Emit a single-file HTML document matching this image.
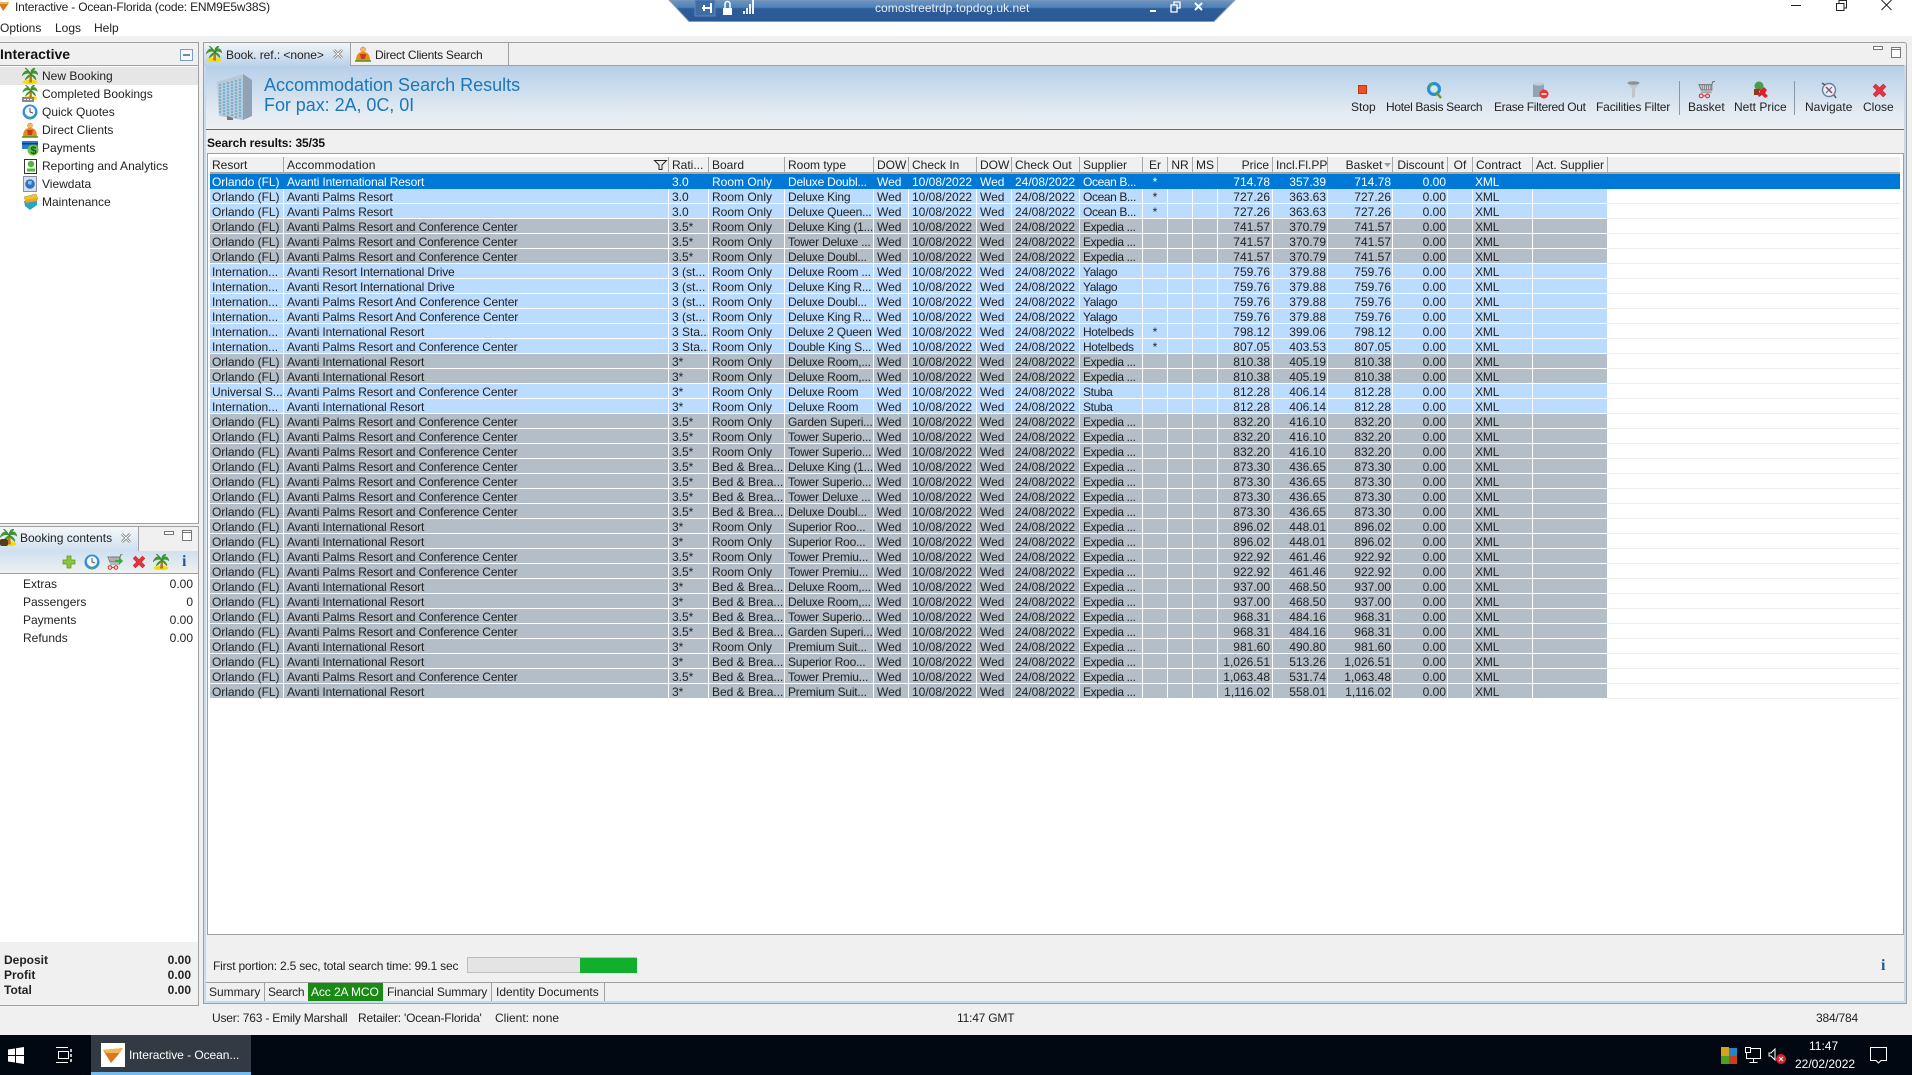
<!DOCTYPE html>
<html><head><meta charset="utf-8"><title>Interactive</title>
<style>
html,body{margin:0;padding:0;width:1912px;height:1075px;overflow:hidden;background:#f0f0f0}
body{position:relative;font:12px/14px "Liberation Sans",sans-serif;color:#222}
.a{position:absolute}
.t{position:absolute;white-space:nowrap;line-height:14px}
.n{letter-spacing:-.2px}
.m{letter-spacing:-.32px}
svg{position:absolute;overflow:visible}
table{position:absolute;left:210px;top:157px;width:1690px;border-collapse:separate;border-spacing:0;table-layout:fixed;font-size:12px}
th{height:15px;padding:0 3px;font-weight:normal;text-align:left;background:#f0f0f0;border-right:1px solid #a8a8a8;border-bottom:2px solid #a8a8a8;box-sizing:content-box;white-space:nowrap;overflow:hidden;line-height:14px}
th:first-child{padding-left:2px}
th:nth-child(2){letter-spacing:.2px}
th:last-child{border-right:0}
td{height:12px;padding:2px 3px 0;border-right:1px solid #fff;border-bottom:1px solid #fff;white-space:nowrap;overflow-x:clip;overflow-y:visible;line-height:12px}
td:nth-child(1){padding-left:2px;letter-spacing:-.05px}
td:nth-child(2){letter-spacing:-.15px}
td:nth-child(5){letter-spacing:-.22px}
td:nth-child(10){letter-spacing:-.38px}
td:nth-child(19){padding-left:2px;letter-spacing:-.15px}
tr.b td{background:#bbdcff}
tr.g td{background:#b4bec9}
tr.s td{background:#0078d7;color:#fff;border-right-color:#0078d7;border-bottom-color:#0078d7}
tbody tr:not(.s) td:nth-child(21){background:#fff;border-bottom-color:#eee;border-right:0}
td:nth-child(n+14):nth-child(-n+17),th:nth-child(n+14):nth-child(-n+17){text-align:right}
td:nth-child(14){padding-right:2px}
td:nth-child(n+15):nth-child(-n+17){padding-right:1px}
td:nth-child(11),td:nth-child(18),th:nth-child(n+11):nth-child(-n+13),th:nth-child(18){text-align:center}
tr.s td:nth-child(n+1){border-right-color:#0078d7}
.ex{background:#fff}
</style></head><body>

<!-- title bar -->
<div class="a ex" style="left:0;top:0;width:1912px;height:36px"></div>
<svg style="left:0;top:1px" width="10" height="10"><path d="M-2 1L9 1L7 5L3 10Z" fill="#d9781c"/><path d="M-2 1L9 1L7 3L0 3Z" fill="#f2b35a"/></svg>
<div class="t" style="left:15px;top:0;letter-spacing:-.2px">Interactive - Ocean-Florida (code: ENM9E5w38S)</div>
<div class="t" style="left:0;top:21px">Options</div>
<div class="t" style="left:55px;top:21px">Logs</div>
<div class="t" style="left:94px;top:21px">Help</div>
<svg style="left:1791px;top:0" width="110" height="12"><path d="M0 5.500H10" stroke="#222"/><path d="M45.500 3.500h7.500v7h-7.500zM48 3V.5h7.500V8H53" fill="none" stroke="#222"/><path d="M90.500 0L100.500 10M100.500 0L90.500 10" stroke="#222"/></svg>

<!-- RDP bar -->
<svg style="left:669px;top:0" width="566" height="23"><defs><linearGradient id="rd" x1="0" y1="0" x2="0" y2="1"><stop offset="0" stop-color="#6a96c4"/><stop offset=".35" stop-color="#4f80b5"/><stop offset=".4" stop-color="#2e5d99"/><stop offset="1" stop-color="#2a5896"/></linearGradient></defs><path d="M0 0H566L545 21.500H20Z" fill="url(#rd)" stroke="#8a9aad"/><rect x="26" y="0" width="20" height="16" fill="#3d6ca6" stroke="#5d88ba"/><path d="M33 8H42M42 3V13M35 5V11" stroke="#fff" stroke-width="2" fill="none"/><path d="M54 8h9v7h-9z" fill="#fff"/><path d="M56 8V4a2.500 2.500 0 015 0v4" fill="none" stroke="#fff" stroke-width="1.500"/><path d="M75 14v-3M78 14V8M81 14V4M84 14V0" stroke="#fff" stroke-width="1.800"/><path d="M481 11h6" stroke="#fff" stroke-width="2"/><path d="M502 5h6v7h-6zM505 5V2h6v6h-3" fill="none" stroke="#fff" stroke-width="1.300"/><path d="M526 3l7 7M533 3l-7 7" stroke="#fff" stroke-width="2"/></svg>
<div class="t" style="left:875px;top:1px;color:#e8eef6;letter-spacing:.06px">comostreetrdp.topdog.uk.net</div>

<!-- left top panel -->
<div class="a" style="left:0;top:42px;width:198px;height:480px;border-top:1px solid #a0a0a0;border-right:1px solid #a0a0a0;border-bottom:1px solid #a0a0a0;background:#fff;box-sizing:content-box"></div>
<div class="a" style="left:0;top:43px;width:198px;height:22px;background:#f0f0f0;border-bottom:1px solid #a0a0a0"></div>
<div class="t" style="left:0;top:47px;font-size:14px;font-weight:bold;color:#111">Interactive</div>
<svg style="left:180px;top:48px" width="13" height="13"><rect x=".5" y="1.500" width="12" height="11" fill="#f6f8fb" stroke="#7b9ec4"/><path d="M3 7H10" stroke="#2a4f80" stroke-width="1.300"/></svg>
<div class="a" style="left:0;top:67px;width:198px;height:18px;background:#e6e6e6"></div>

<svg width="0" height="0" style="left:0;top:0"><defs>
<symbol id="palm" viewBox="0 0 16 16"><ellipse cx="8" cy="14" rx="7.500" ry="2.200" fill="#f5dc00"/><path d="M7 14.500L8 6L10 6L10 14.500Z" fill="#b67a20"/><path d="M9 6C6 1 2 2 0 8C3 5 6 5 9 6ZM9 6C12 1 15 2 16 7C14 5 11 5 9 6ZM9 6C8 3 10 0 13 0C12 3 10 4 9 6ZM9 6C7 3 5 0 3 0C5 3 8 4 9 6ZM9 6C6 7 4 9 3 12C6 10 8 9 9 6ZM9 6C12 7 14 9 14 12C12 10 10 9 9 6Z" fill="#3f9b2a" stroke="#2c7a1c" stroke-width=".4"/></symbol>
<symbol id="clock" viewBox="0 0 16 16"><circle cx="8" cy="8" r="7.500" fill="#2f8fd8"/><path d="M2 11A7 7 0 0014 11L8 16Z" fill="#54b948"/><circle cx="8" cy="7.500" r="5.200" fill="#f4f6f8"/><path d="M8 4V8L11 9" stroke="#555" fill="none"/></symbol>
<symbol id="client" viewBox="0 0 16 16"><circle cx="8" cy="3.500" r="2.500" fill="#f3b95f" stroke="#c66" stroke-width=".5"/><path d="M1 15C1 8 4 6 8 6C12 6 15 8 15 15Z" fill="#e88a1a"/><path d="M5 8H11L10 13H6Z" fill="#c83a1c"/><path d="M0 15H16" stroke="#3f9b2a" stroke-width="1.500"/></symbol>
<symbol id="cross" viewBox="0 0 16 16"><path d="M2 4.500L4.500 2L8 5.500L11.500 2L14 4.500L10.500 8L14 11.500L11.500 14L8 10.500L4.500 14L2 11.500L5.500 8Z" fill="#e8333f" stroke="#b9202a" stroke-width=".5"/></symbol>
<symbol id="cart" viewBox="0 0 16 16"><path d="M1 3H13V8H3ZM13 3L14 0H16" fill="#ccc" stroke="#777"/><path d="M4 3V8M6 3V8M8 3V8M10 3V8M12 3V8" stroke="#777" stroke-width=".7"/><path d="M3 10H13" stroke="#888"/><circle cx="3" cy="13.500" r="1.800" fill="none" stroke="#d33" stroke-width="1.100"/><circle cx="9" cy="13.500" r="1.800" fill="none" stroke="#d33" stroke-width="1.100"/><path d="M5 13.500H7" stroke="#d33"/></symbol>
</defs></svg>

<svg style="left:22px;top:67px" width="16" height="18"><use href="#palm" width="16" height="18"/></svg>
<svg style="left:22px;top:85px" width="16" height="18"><use href="#palm" width="16" height="15"/><rect x="0" y="12" width="12" height="5" fill="#888"/><path d="M2 14.500h8" stroke="#eee" stroke-dasharray="2 1"/></svg>
<svg style="left:22px;top:103px" width="16" height="18"><use href="#clock" y="1" width="16" height="16"/></svg>
<svg style="left:22px;top:121px" width="16" height="18"><use href="#client" y="1" width="16" height="16"/></svg>
<svg style="left:22px;top:139px" width="16" height="18"><path d="M0 2H16V10H0Z" fill="#2b7fd0"/><path d="M0 4H16V5.500H0Z" fill="#0c3d78"/><circle cx="11" cy="11" r="5.500" fill="#6cc04a"/><text x="8.500" y="15" font-size="11" font-weight="bold" fill="#0a5c12" font-family="Liberation Sans, sans-serif">$</text></svg>
<svg style="left:23px;top:157px" width="15" height="18"><rect x="1.500" y="2.500" width="12" height="14" fill="#fff" stroke="#333"/><circle cx="8" cy="7" r="3.200" fill="#53b83a"/><path d="M4 13H12" stroke="#53b83a" stroke-width="3"/></svg>
<svg style="left:23px;top:175px" width="15" height="18"><rect x=".5" y="1.500" width="13" height="15" fill="#d9dfea" stroke="#8892a6"/><circle cx="7" cy="9" r="4.800" fill="#2c72c8"/><path d="M5 6L9 6L8 10L5 9Z" fill="#8fbdea"/></svg>
<svg style="left:23px;top:193px" width="15" height="18"><path d="M1 4L13 1L15 6L3 9Z" fill="#f2c42b" stroke="#b88a10" stroke-width=".5"/><path d="M1 8L14 6V12L7 17L2 13Z" fill="#2ca4c4"/><path d="M2 7L14 5L14 8L3 10Z" fill="#e7a52a"/></svg>

<div class="t" style="left:42px;top:69px">New Booking</div>
<div class="t" style="left:42px;top:87px">Completed Bookings</div>
<div class="t" style="left:42px;top:105px">Quick Quotes</div>
<div class="t" style="left:42px;top:123px">Direct Clients</div>
<div class="t" style="left:42px;top:141px">Payments</div>
<div class="t" style="left:42px;top:159px">Reporting and Analytics</div>
<div class="t" style="left:42px;top:177px">Viewdata</div>
<div class="t" style="left:42px;top:195px">Maintenance</div>

<!-- booking contents panel -->
<div class="a" style="left:0;top:526px;width:198px;height:478px;border-top:1px solid #a0a0a0;border-right:1px solid #a0a0a0;border-bottom:1px solid #a0a0a0;background:#f0f0f0"></div>
<div class="a" style="left:0;top:551px;width:198px;height:22px;background:linear-gradient(#cfe0f0,#f0f0f0);border-bottom:1px solid #a0a0a0"></div>
<div class="a" style="left:0;top:527px;width:138px;height:24px;background:linear-gradient(#f5f7fa,#cfe0f0);border-right:1px solid #a0a0a0"></div>
<div class="a" style="left:0;top:574px;width:198px;height:368px;background:#fff"></div>
<svg style="left:0;top:529px" width="17" height="17"><use href="#palm" width="17" height="17"/><rect x="0" y="10" width="8" height="7" rx="2" fill="#5a3a1c"/></svg>
<div class="t" style="left:20px;top:531px">Booking contents</div>
<svg style="left:121px;top:533px" width="11" height="11"><path d="M1 1L9 9M9 1L1 9" stroke="#777" stroke-width="2.600"/><path d="M1 1L9 9M9 1L1 9" stroke="#fff" stroke-width="1"/></svg>
<svg style="left:164px;top:530px" width="30" height="13"><rect x=".5" y="1.500" width="9" height="3" fill="#fff" stroke="#777"/><rect x="18.500" y=".5" width="9" height="10" fill="#fff" stroke="#777"/><path d="M18.500 2.500h9" stroke="#777"/></svg>
<svg style="left:62px;top:555px" width="14" height="14"><path d="M5 1H9V5H13V9H9V13H5V9H1V5H5Z" fill="#8cc63f" stroke="#5c9120" stroke-width=".7"/></svg>
<svg style="left:84px;top:554px" width="16" height="16"><use href="#clock" width="16" height="16"/></svg>
<svg style="left:107px;top:554px" width="16" height="16"><use href="#cart" width="16" height="16"/><path d="M8 6H12V3L16 7L12 11V8H8Z" fill="#2cb52c"/></svg>
<svg style="left:131px;top:554px" width="16" height="16"><use href="#cross" width="16" height="16"/></svg>
<svg style="left:153px;top:554px" width="16" height="16"><use href="#palm" width="16" height="16"/></svg>
<div class="t" style="left:182px;top:554px;font:bold 16px/16px 'Liberation Serif',serif;color:#1f5a9c">i</div>
<div class="t" style="left:23px;top:577px">Extras</div><div class="t" style="right:1719px;top:577px">0.00</div>
<div class="t" style="left:23px;top:595px">Passengers</div><div class="t" style="right:1719px;top:595px">0</div>
<div class="t" style="left:23px;top:613px">Payments</div><div class="t" style="right:1719px;top:613px">0.00</div>
<div class="t" style="left:23px;top:631px">Refunds</div><div class="t" style="right:1719px;top:631px">0.00</div>
<div class="t" style="left:4px;top:953px;font-weight:bold">Deposit</div><div class="t" style="right:1721px;top:953px;font-weight:bold">0.00</div>
<div class="t" style="left:4px;top:968px;font-weight:bold">Profit</div><div class="t" style="right:1721px;top:968px;font-weight:bold">0.00</div>
<div class="t" style="left:4px;top:983px;font-weight:bold">Total</div><div class="t" style="right:1721px;top:983px;font-weight:bold">0.00</div>

<!-- right panel -->
<div class="a" style="left:203px;top:42px;width:1704px;height:962px;border-top:1px solid #a0a0a0;border-left:1px solid #a0a0a0;border-right:1px solid #a0a0a0;border-bottom:1px solid #a0a0a0;border-top-right-radius:3px;box-sizing:border-box;background:#f0f0f0"></div>
<div class="a" style="left:204px;top:65px;width:2px;height:938px;background:#c7dbee"></div>
<div class="a" style="left:1904px;top:65px;width:2px;height:938px;background:#c7dbee"></div>
<div class="a" style="left:204px;top:1001px;width:1702px;height:2px;background:#c7dbee"></div>
<div class="a" style="left:206px;top:65px;width:1698px;height:1px;background:#a0a0a0"></div>
<div class="a" style="left:206px;top:66px;width:1698px;height:63px;background:linear-gradient(#b5cfe8,#e4ebf2 75%,#eef0f2)"></div>
<div class="a" style="left:206px;top:129px;width:1698px;height:1px;background:#1f84b4"></div>
<!-- tabs -->
<div class="a" style="left:204px;top:43px;width:146px;height:23px;background:linear-gradient(#f2f5f8,#b9d1e9);border-right:1px solid #a0a0a0;border-top-left-radius:4px"></div>
<div class="a" style="left:351px;top:43px;width:157px;height:22px;background:#f0f0f0;border-right:1px solid #a0a0a0"></div>
<svg style="left:206px;top:46px" width="16" height="16"><use href="#palm" width="16" height="16"/></svg>
<div class="t" style="left:226px;top:48px;letter-spacing:-.05px">Book. ref.: &lt;none&gt;</div>
<svg style="left:333px;top:49px" width="11" height="11"><path d="M1 1L9 9M9 1L1 9" stroke="#777" stroke-width="2.600"/><path d="M1 1L9 9M9 1L1 9" stroke="#fff" stroke-width="1"/></svg>
<svg style="left:355px;top:46px" width="16" height="16"><use href="#client" width="16" height="16"/></svg>
<div class="t" style="left:375px;top:48px;letter-spacing:-.25px">Direct Clients Search</div>
<svg style="left:1873px;top:45px" width="30" height="14"><rect x=".5" y="1.500" width="9" height="3" fill="#fff" stroke="#777"/><rect x="18.500" y="2.500" width="9" height="10" fill="#fff" stroke="#777"/><path d="M18.500 4.500h9" stroke="#777"/></svg>

<!-- header content -->
<svg style="left:217px;top:74px" width="36" height="46"><path d="M0 8L26 0L35 6V42L26 46L2 42Z" fill="#b9c8d4"/><path d="M26 0L35 6V42L26 46Z" fill="#8ea4b4"/><path d="M3 10V40M7 9V41M11 8V42M15 7V43M19 6V44M23 5V44" stroke="#6fb4d4" stroke-width="2" stroke-dasharray="2 1"/><path d="M10 42l6 2v2h-6z" fill="#777"/></svg>
<div class="t" style="left:264px;top:76px;font-size:18px;line-height:18px;color:#1a78b8;">Accommodation Search Results</div>
<div class="t" style="left:264px;top:96px;font-size:18px;line-height:18px;color:#1a78b8;letter-spacing:-.05px">For pax: 2A, 0C, 0I</div>

<!-- toolbar -->
<svg style="left:1358px;top:85px" width="9" height="9"><rect x=".5" y=".5" width="8" height="8" fill="#f25022" stroke="#b83a10"/></svg>
<svg style="left:1426px;top:82px" width="17" height="17"><circle cx="8" cy="7" r="7" fill="#2a8fd4"/><path d="M3 4A7 7 0 017 1L6 6Z" fill="#4cae3c"/><circle cx="8" cy="7" r="3.800" fill="#cfeaf5"/><path d="M10 10L15 16" stroke="#6a9b20" stroke-width="2.400"/></svg>
<svg style="left:1532px;top:82px" width="17" height="17"><path d="M1 2C1 0 12 0 12 2V15H1Z" fill="#8fa3b5"/><ellipse cx="6.500" cy="2" rx="5.500" ry="1.600" fill="#c0ccd6"/><circle cx="12" cy="12" r="4.500" fill="#e33"/><path d="M9.500 12H14.500" stroke="#fff" stroke-width="1.500"/></svg>
<svg style="left:1626px;top:81px" width="15" height="18"><path d="M1 1H14L9 8V16L6 17V8Z" fill="#c3c6c8"/><ellipse cx="7.500" cy="2" rx="6" ry="1.800" fill="#8e9194"/></svg>
<svg style="left:1698px;top:81px" width="17" height="18"><use href="#cart" width="17" height="18"/></svg>
<svg style="left:1752px;top:81px" width="18" height="18"><circle cx="7" cy="5" r="4.500" fill="#4a9b4a"/><path d="M2 8H7V14H2Z" fill="#8a3b1c"/><path d="M6 7L9 9L12 6L15 9L13 12L16 15L13 17L10 14L7 16L5 13L8 11Z" fill="#dc2027"/></svg>
<svg style="left:1820px;top:81px" width="18" height="18"><circle cx="9" cy="9" r="6.500" fill="#e8eef4" stroke="#6a7f98" stroke-width="1.400"/><path d="M6 6L12 12" stroke="#c33" stroke-width="1.500"/><path d="M12 6L6 12" stroke="#2b6ab0"/><path d="M2 2L5 4M14 14L16 17" stroke="#555" stroke-width="1.500"/></svg>
<svg style="left:1871px;top:82px" width="17" height="17"><use href="#cross" width="17" height="17"/></svg>
<div class="t" style="left:1351px;top:100px">Stop</div>
<div class="t m" style="left:1386px;top:100px">Hotel Basis Search</div>
<div class="t m" style="left:1494px;top:100px">Erase Filtered Out</div>
<div class="t" style="left:1596px;top:100px;letter-spacing:-.15px">Facilities Filter</div>
<div class="t" style="left:1688px;top:100px">Basket</div>
<div class="t" style="left:1734px;top:100px">Nett Price</div>
<div class="t" style="left:1805px;top:100px">Navigate</div>
<div class="t" style="left:1863px;top:100px">Close</div>
<div class="a" style="left:1679px;top:81px;width:1px;height:34px;background:#8a98a6"></div>
<div class="a" style="left:1794px;top:81px;width:1px;height:34px;background:#8a98a6"></div>

<div class="t" style="left:207px;top:136px;font-weight:bold;color:#111;letter-spacing:-.1px">Search results: 35/35</div>

<!-- grid -->
<div class="a" style="left:207px;top:153px;width:1697px;height:782px;background:#fff;border:1px solid #a0a0a0;box-sizing:border-box"></div>
<table>
<colgroup><col style="width:74px"><col style="width:385px"><col style="width:40px"><col style="width:76px"><col style="width:89px"><col style="width:35px"><col style="width:68px"><col style="width:35px"><col style="width:68px"><col style="width:63px"><col style="width:25px"><col style="width:25px"><col style="width:25px"><col style="width:55px"><col style="width:55px"><col style="width:65px"><col style="width:55px"><col style="width:25px"><col style="width:60px"><col style="width:75px"><col style="width:292px"></colgroup>
<thead><tr><th>Resort<th>Accommodation<th>Rati...<th>Board<th>Room type<th>DOW<th>Check In<th>DOW<th>Check Out<th>Supplier<th>Er<th>NR<th>MS<th>Price<th>Incl.Fl.PP<th>Basket&nbsp;&nbsp;<th>Discount<th>Of<th>Contract<th>Act. Supplier<th></tr></thead>
<tbody>
<tr class=s><td>Orlando (FL)<td>Avanti International Resort<td>3.0<td>Room Only<td>Deluxe Doubl...<td>Wed<td>10/08/2022<td>Wed<td>24/08/2022<td>Ocean B...<td>*<td><td><td>714.78<td>357.39<td>714.78<td>0.00<td><td>XML<td><td></tr>
<tr class=b><td>Orlando (FL)<td>Avanti Palms Resort<td>3.0<td>Room Only<td>Deluxe King<td>Wed<td>10/08/2022<td>Wed<td>24/08/2022<td>Ocean B...<td>*<td><td><td>727.26<td>363.63<td>727.26<td>0.00<td><td>XML<td><td></tr>
<tr class=b><td>Orlando (FL)<td>Avanti Palms Resort<td>3.0<td>Room Only<td>Deluxe Queen...<td>Wed<td>10/08/2022<td>Wed<td>24/08/2022<td>Ocean B...<td>*<td><td><td>727.26<td>363.63<td>727.26<td>0.00<td><td>XML<td><td></tr>
<tr class=g><td>Orlando (FL)<td>Avanti Palms Resort and Conference Center<td>3.5*<td>Room Only<td>Deluxe King (1...<td>Wed<td>10/08/2022<td>Wed<td>24/08/2022<td>Expedia ...<td><td><td><td>741.57<td>370.79<td>741.57<td>0.00<td><td>XML<td><td></tr>
<tr class=g><td>Orlando (FL)<td>Avanti Palms Resort and Conference Center<td>3.5*<td>Room Only<td>Tower Deluxe ...<td>Wed<td>10/08/2022<td>Wed<td>24/08/2022<td>Expedia ...<td><td><td><td>741.57<td>370.79<td>741.57<td>0.00<td><td>XML<td><td></tr>
<tr class=g><td>Orlando (FL)<td>Avanti Palms Resort and Conference Center<td>3.5*<td>Room Only<td>Deluxe Doubl...<td>Wed<td>10/08/2022<td>Wed<td>24/08/2022<td>Expedia ...<td><td><td><td>741.57<td>370.79<td>741.57<td>0.00<td><td>XML<td><td></tr>
<tr class=b><td>Internation...<td>Avanti Resort International Drive<td>3 (st...<td>Room Only<td>Deluxe Room ...<td>Wed<td>10/08/2022<td>Wed<td>24/08/2022<td>Yalago<td><td><td><td>759.76<td>379.88<td>759.76<td>0.00<td><td>XML<td><td></tr>
<tr class=b><td>Internation...<td>Avanti Resort International Drive<td>3 (st...<td>Room Only<td>Deluxe King R...<td>Wed<td>10/08/2022<td>Wed<td>24/08/2022<td>Yalago<td><td><td><td>759.76<td>379.88<td>759.76<td>0.00<td><td>XML<td><td></tr>
<tr class=b><td>Internation...<td>Avanti Palms Resort And Conference Center<td>3 (st...<td>Room Only<td>Deluxe Doubl...<td>Wed<td>10/08/2022<td>Wed<td>24/08/2022<td>Yalago<td><td><td><td>759.76<td>379.88<td>759.76<td>0.00<td><td>XML<td><td></tr>
<tr class=b><td>Internation...<td>Avanti Palms Resort And Conference Center<td>3 (st...<td>Room Only<td>Deluxe King R...<td>Wed<td>10/08/2022<td>Wed<td>24/08/2022<td>Yalago<td><td><td><td>759.76<td>379.88<td>759.76<td>0.00<td><td>XML<td><td></tr>
<tr class=b><td>Internation...<td>Avanti International Resort<td>3 Sta...<td>Room Only<td>Deluxe 2 Queen<td>Wed<td>10/08/2022<td>Wed<td>24/08/2022<td>Hotelbeds<td>*<td><td><td>798.12<td>399.06<td>798.12<td>0.00<td><td>XML<td><td></tr>
<tr class=b><td>Internation...<td>Avanti Palms Resort and Conference Center<td>3 Sta...<td>Room Only<td>Double King S...<td>Wed<td>10/08/2022<td>Wed<td>24/08/2022<td>Hotelbeds<td>*<td><td><td>807.05<td>403.53<td>807.05<td>0.00<td><td>XML<td><td></tr>
<tr class=g><td>Orlando (FL)<td>Avanti International Resort<td>3*<td>Room Only<td>Deluxe Room,...<td>Wed<td>10/08/2022<td>Wed<td>24/08/2022<td>Expedia ...<td><td><td><td>810.38<td>405.19<td>810.38<td>0.00<td><td>XML<td><td></tr>
<tr class=g><td>Orlando (FL)<td>Avanti International Resort<td>3*<td>Room Only<td>Deluxe Room,...<td>Wed<td>10/08/2022<td>Wed<td>24/08/2022<td>Expedia ...<td><td><td><td>810.38<td>405.19<td>810.38<td>0.00<td><td>XML<td><td></tr>
<tr class=b><td>Universal S...<td>Avanti Palms Resort and Conference Center<td>3*<td>Room Only<td>Deluxe Room<td>Wed<td>10/08/2022<td>Wed<td>24/08/2022<td>Stuba<td><td><td><td>812.28<td>406.14<td>812.28<td>0.00<td><td>XML<td><td></tr>
<tr class=b><td>Internation...<td>Avanti International Resort<td>3*<td>Room Only<td>Deluxe Room<td>Wed<td>10/08/2022<td>Wed<td>24/08/2022<td>Stuba<td><td><td><td>812.28<td>406.14<td>812.28<td>0.00<td><td>XML<td><td></tr>
<tr class=g><td>Orlando (FL)<td>Avanti Palms Resort and Conference Center<td>3.5*<td>Room Only<td>Garden Superi...<td>Wed<td>10/08/2022<td>Wed<td>24/08/2022<td>Expedia ...<td><td><td><td>832.20<td>416.10<td>832.20<td>0.00<td><td>XML<td><td></tr>
<tr class=g><td>Orlando (FL)<td>Avanti Palms Resort and Conference Center<td>3.5*<td>Room Only<td>Tower Superio...<td>Wed<td>10/08/2022<td>Wed<td>24/08/2022<td>Expedia ...<td><td><td><td>832.20<td>416.10<td>832.20<td>0.00<td><td>XML<td><td></tr>
<tr class=g><td>Orlando (FL)<td>Avanti Palms Resort and Conference Center<td>3.5*<td>Room Only<td>Tower Superio...<td>Wed<td>10/08/2022<td>Wed<td>24/08/2022<td>Expedia ...<td><td><td><td>832.20<td>416.10<td>832.20<td>0.00<td><td>XML<td><td></tr>
<tr class=g><td>Orlando (FL)<td>Avanti Palms Resort and Conference Center<td>3.5*<td>Bed &amp; Brea...<td>Deluxe King (1...<td>Wed<td>10/08/2022<td>Wed<td>24/08/2022<td>Expedia ...<td><td><td><td>873.30<td>436.65<td>873.30<td>0.00<td><td>XML<td><td></tr>
<tr class=g><td>Orlando (FL)<td>Avanti Palms Resort and Conference Center<td>3.5*<td>Bed &amp; Brea...<td>Tower Superio...<td>Wed<td>10/08/2022<td>Wed<td>24/08/2022<td>Expedia ...<td><td><td><td>873.30<td>436.65<td>873.30<td>0.00<td><td>XML<td><td></tr>
<tr class=g><td>Orlando (FL)<td>Avanti Palms Resort and Conference Center<td>3.5*<td>Bed &amp; Brea...<td>Tower Deluxe ...<td>Wed<td>10/08/2022<td>Wed<td>24/08/2022<td>Expedia ...<td><td><td><td>873.30<td>436.65<td>873.30<td>0.00<td><td>XML<td><td></tr>
<tr class=g><td>Orlando (FL)<td>Avanti Palms Resort and Conference Center<td>3.5*<td>Bed &amp; Brea...<td>Deluxe Doubl...<td>Wed<td>10/08/2022<td>Wed<td>24/08/2022<td>Expedia ...<td><td><td><td>873.30<td>436.65<td>873.30<td>0.00<td><td>XML<td><td></tr>
<tr class=g><td>Orlando (FL)<td>Avanti International Resort<td>3*<td>Room Only<td>Superior Roo...<td>Wed<td>10/08/2022<td>Wed<td>24/08/2022<td>Expedia ...<td><td><td><td>896.02<td>448.01<td>896.02<td>0.00<td><td>XML<td><td></tr>
<tr class=g><td>Orlando (FL)<td>Avanti International Resort<td>3*<td>Room Only<td>Superior Roo...<td>Wed<td>10/08/2022<td>Wed<td>24/08/2022<td>Expedia ...<td><td><td><td>896.02<td>448.01<td>896.02<td>0.00<td><td>XML<td><td></tr>
<tr class=g><td>Orlando (FL)<td>Avanti Palms Resort and Conference Center<td>3.5*<td>Room Only<td>Tower Premiu...<td>Wed<td>10/08/2022<td>Wed<td>24/08/2022<td>Expedia ...<td><td><td><td>922.92<td>461.46<td>922.92<td>0.00<td><td>XML<td><td></tr>
<tr class=g><td>Orlando (FL)<td>Avanti Palms Resort and Conference Center<td>3.5*<td>Room Only<td>Tower Premiu...<td>Wed<td>10/08/2022<td>Wed<td>24/08/2022<td>Expedia ...<td><td><td><td>922.92<td>461.46<td>922.92<td>0.00<td><td>XML<td><td></tr>
<tr class=g><td>Orlando (FL)<td>Avanti International Resort<td>3*<td>Bed &amp; Brea...<td>Deluxe Room,...<td>Wed<td>10/08/2022<td>Wed<td>24/08/2022<td>Expedia ...<td><td><td><td>937.00<td>468.50<td>937.00<td>0.00<td><td>XML<td><td></tr>
<tr class=g><td>Orlando (FL)<td>Avanti International Resort<td>3*<td>Bed &amp; Brea...<td>Deluxe Room,...<td>Wed<td>10/08/2022<td>Wed<td>24/08/2022<td>Expedia ...<td><td><td><td>937.00<td>468.50<td>937.00<td>0.00<td><td>XML<td><td></tr>
<tr class=g><td>Orlando (FL)<td>Avanti Palms Resort and Conference Center<td>3.5*<td>Bed &amp; Brea...<td>Tower Superio...<td>Wed<td>10/08/2022<td>Wed<td>24/08/2022<td>Expedia ...<td><td><td><td>968.31<td>484.16<td>968.31<td>0.00<td><td>XML<td><td></tr>
<tr class=g><td>Orlando (FL)<td>Avanti Palms Resort and Conference Center<td>3.5*<td>Bed &amp; Brea...<td>Garden Superi...<td>Wed<td>10/08/2022<td>Wed<td>24/08/2022<td>Expedia ...<td><td><td><td>968.31<td>484.16<td>968.31<td>0.00<td><td>XML<td><td></tr>
<tr class=g><td>Orlando (FL)<td>Avanti International Resort<td>3*<td>Room Only<td>Premium Suit...<td>Wed<td>10/08/2022<td>Wed<td>24/08/2022<td>Expedia ...<td><td><td><td>981.60<td>490.80<td>981.60<td>0.00<td><td>XML<td><td></tr>
<tr class=g><td>Orlando (FL)<td>Avanti International Resort<td>3*<td>Bed &amp; Brea...<td>Superior Roo...<td>Wed<td>10/08/2022<td>Wed<td>24/08/2022<td>Expedia ...<td><td><td><td>1,026.51<td>513.26<td>1,026.51<td>0.00<td><td>XML<td><td></tr>
<tr class=g><td>Orlando (FL)<td>Avanti Palms Resort and Conference Center<td>3.5*<td>Bed &amp; Brea...<td>Tower Premiu...<td>Wed<td>10/08/2022<td>Wed<td>24/08/2022<td>Expedia ...<td><td><td><td>1,063.48<td>531.74<td>1,063.48<td>0.00<td><td>XML<td><td></tr>
<tr class=g><td>Orlando (FL)<td>Avanti International Resort<td>3*<td>Bed &amp; Brea...<td>Premium Suit...<td>Wed<td>10/08/2022<td>Wed<td>24/08/2022<td>Expedia ...<td><td><td><td>1,116.02<td>558.01<td>1,116.02<td>0.00<td><td>XML<td><td></tr>
</tbody></table>
<svg style="left:654px;top:160px" width="14" height="10"><path d="M.5.5H12.500L8 5V9.500L5 9.500V5Z" fill="none" stroke="#222"/></svg>
<svg style="left:1384px;top:163px" width="8" height="5"><path d="M0 0H7L3.500 4Z" fill="#999"/></svg>

<!-- progress -->
<div class="t n" style="left:213px;top:959px">First portion: 2.5 sec, total search time: 99.1 sec</div>
<div class="a" style="left:467px;top:957px;width:170px;height:16px;background:#e4e4e4;border:1px solid #bdbdbd;box-sizing:border-box"></div>
<div class="a" style="left:580px;top:958px;width:57px;height:15px;background:#10b02e"></div>
<div class="t" style="left:1881px;top:958px;font:bold 16px/16px 'Liberation Serif',serif;color:#1f5a9c">i</div>
<div class="a" style="left:206px;top:982px;width:1698px;height:1px;background:#a0a0a0"></div>

<!-- bottom tabs -->
<div class="a" style="left:264px;top:983px;width:1px;height:18px;background:#a0a0a0"></div>
<div class="a" style="left:308px;top:983px;width:75px;height:18px;background:#1a8a14"></div>
<div class="a" style="left:491px;top:983px;width:1px;height:18px;background:#a0a0a0"></div>
<div class="a" style="left:604px;top:983px;width:1px;height:18px;background:#a0a0a0"></div>
<div class="t" style="left:209px;top:985px">Summary</div>
<div class="t" style="left:268px;top:985px;letter-spacing:-.3px">Search</div>
<div class="t" style="left:311px;top:985px;color:#fff;letter-spacing:-.1px">Acc 2A MCO</div>
<div class="t" style="left:387px;top:985px;letter-spacing:-.15px">Financial Summary</div>
<div class="t" style="left:496px;top:985px">Identity Documents</div>

<!-- status -->
<div class="t n" style="left:212px;top:1011px">User: 763 - Emily Marshall</div>
<div class="t n" style="left:358px;top:1011px">Retailer: 'Ocean-Florida'</div>
<div class="t" style="left:495px;top:1011px">Client: none</div>
<div class="t n" style="left:957px;top:1011px">11:47 GMT</div>
<div class="t" style="left:1816px;top:1011px;letter-spacing:-.2px">384/784</div>

<!-- taskbar -->
<div class="a" style="left:0;top:1035px;width:1912px;height:40px;background:#020811"></div>
<svg style="left:8px;top:1047px" width="17" height="17"><path d="M0 2.500L7 1.500V8H0ZM8 1.300L16 0V8H8ZM0 9H7V15.500L0 14.500ZM8 9H16V17L8 15.700Z" fill="#fff"/></svg>
<svg style="left:56px;top:1047px" width="17" height="17"><path d="M0 .5H12M0 15.500H12M2.500 4.500H12.500V11.500H2.500Z" fill="none" stroke="#fff"/><path d="M15 2V5M15 7V10M15 12V15" stroke="#fff" stroke-width="1.500"/></svg>
<div class="a" style="left:91px;top:1035px;width:160px;height:37px;background:#333a44"></div>
<div class="a" style="left:91px;top:1072px;width:160px;height:3px;background:#76b9ed"></div>
<div class="a" style="left:101px;top:1043px;width:24px;height:24px;background:#fff"></div>
<svg style="left:103px;top:1048px" width="20" height="15"><path d="M0 2L20 0L15 7L8 15Z" fill="#d9781c"/><path d="M0 2L20 0L16 5L3 5Z" fill="#f2b35a"/></svg>
<div class="t" style="left:129px;top:1048px;color:#fff;letter-spacing:-.05px">Interactive - Ocean...</div>
<svg style="left:1721px;top:1047px" width="17" height="17"><rect x="0" y="0" width="8" height="9" fill="#d9a020"/><rect x="8" y="1" width="8" height="8" fill="#1e88c8"/><rect x="0" y="9" width="8" height="8" fill="#4ca02a"/><rect x="8" y="9" width="8" height="8" fill="#c8401c"/></svg>
<svg style="left:1745px;top:1047px" width="17" height="17"><path d="M1.500 1.500H15.500V11.500H1.500ZM8.500 11.500V15.500M4.500 15.500H12.500" fill="#020811" stroke="#fff"/><rect x=".5" y=".5" width="5" height="5" fill="#020811" stroke="#fff"/></svg>
<svg style="left:1769px;top:1047px" width="18" height="18"><path d="M0 6H2L6 2V13L2 9H0Z" fill="none" stroke="#fff"/><circle cx="12" cy="12" r="5" fill="#d9232e"/><path d="M10 10L14 14M14 10L10 14" stroke="#fff"/></svg>
<div class="t" style="left:1809px;top:1039px;color:#fff">11:47</div>
<div class="t" style="left:1795px;top:1057px;color:#fff">22/02/2022</div>
<svg style="left:1870px;top:1047px" width="18" height="18"><path d="M.5.5H16.500V13.500H11L8.500 16L6 13.500H.5Z" fill="none" stroke="#fff"/></svg>
</body></html>
